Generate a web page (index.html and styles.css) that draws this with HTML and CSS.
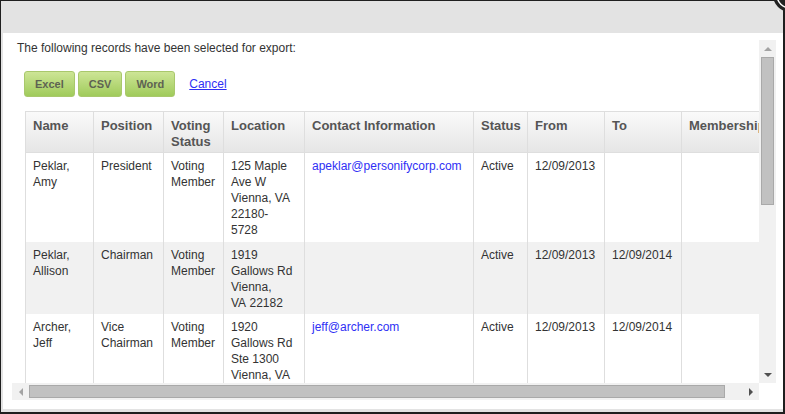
FILE: index.html
```html
<!DOCTYPE html>
<html lang="en">
<head>
<meta charset="utf-8">
<title>Export Records</title>
<link rel="stylesheet" href="styles.css">
</head>
<body>
<div class="dialog">
  <div class="panel">
    <div class="scroller">
      <div class="viewport">
        <p class="intro">The following records have been selected for export:</p>
        <div class="actions">
          <button class="btn" type="button">Excel</button>
          <button class="btn" type="button">CSV</button>
          <button class="btn" type="button">Word</button>
          <a class="cancel" href="#">Cancel</a>
        </div>
        <table class="records">
          <thead>
            <tr>
              <th class="c-name">Name</th>
              <th class="c-pos">Position</th>
              <th class="c-vote">Voting Status</th>
              <th class="c-loc">Location</th>
              <th class="c-contact">Contact Information</th>
              <th class="c-status">Status</th>
              <th class="c-from">From</th>
              <th class="c-to">To</th>
              <th class="c-member">Membership</th>
            </tr>
          </thead>
          <tbody>
            <tr>
              <td>Peklar, Amy</td>
              <td>President</td>
              <td>Voting Member</td>
              <td>125 Maple Ave W Vienna, VA 22180-<wbr>5728</td>
              <td><a class="mail" href="#">apeklar@personifycorp.com</a></td>
              <td>Active</td>
              <td>12/09/2013</td>
              <td></td>
              <td></td>
            </tr>
            <tr class="alt">
              <td>Peklar, Allison</td>
              <td>Chairman</td>
              <td>Voting Member</td>
              <td>1919 Gallows Rd Vienna, VA&nbsp;22182</td>
              <td></td>
              <td>Active</td>
              <td>12/09/2013</td>
              <td>12/09/2014</td>
              <td></td>
            </tr>
            <tr>
              <td>Archer, Jeff</td>
              <td>Vice Chairman</td>
              <td>Voting Member</td>
              <td>1920 Gallows Rd Ste 1300 Vienna, VA 22182</td>
              <td><a class="mail" href="#">jeff@archer.com</a></td>
              <td>Active</td>
              <td>12/09/2013</td>
              <td>12/09/2014</td>
              <td></td>
            </tr>
          </tbody>
        </table>
      </div>
      <div class="vbar">
        <div class="sb-btn"><span class="arr arr-up"></span></div>
        <div class="vthumb"></div>
        <div class="sb-fill"></div>
        <div class="sb-btn"><span class="arr arr-down"></span></div>
      </div>
      <div class="hbar">
        <div class="sb-btn"><span class="arr arr-left"></span></div>
        <div class="hthumb"></div>
        <div class="sb-fill"></div>
        <div class="sb-btn"><span class="arr arr-right"></span></div>
      </div>
    </div>
  </div>
  <svg class="close" width="16" height="16" viewBox="0 0 16 16" aria-hidden="true">
    <circle cx="21" cy="-5" r="17" fill="#222"/>
    <circle cx="21" cy="-5" r="13" fill="none" stroke="#fff" stroke-width="1.5"/>
  </svg>
</div>
</body>
</html>
```
FILE: styles.css
```css
html, body {
  margin: 0;
  padding: 0;
}

body {
  font-family: "Liberation Sans", Arial, sans-serif;
  font-size: 12px;
  color: #333;
  background: #e3e3e3;
}

.dialog {
  position: relative;
  box-sizing: border-box;
  width: 785px;
  height: 414px;
  border-style: solid;
  border-color: #1f1f1f;
  border-width: 1px 2px 2px 1px;
  background: #e3e3e3;
  padding: 32px 0 3px 2px;
  display: flex;
}

.panel {
  flex: 1;
  background: #fff;
  padding: 7px 7px 9px 9px;
  display: flex;
  min-width: 0;
}

.scroller {
  flex: 1;
  display: grid;
  grid-template-columns: minmax(0, 1fr) 17px;
  grid-template-rows: minmax(0, 1fr) 17px;
  min-width: 0;
  min-height: 0;
}

.viewport {
  overflow: hidden;
  min-width: 0;
  min-height: 0;
}

.intro {
  margin: 0 0 0 5px;
  line-height: 16px;
}

.actions {
  display: flex;
  align-items: center;
  gap: 3px;
  margin: 15px 0 0 12px;
}

.btn {
  box-sizing: border-box;
  height: 26px;
  padding: 0 10px;
  border: 1px solid #a9c86c;
  border-radius: 3px;
  background: linear-gradient(#cde596, #a0cb5b);
  font-family: "Liberation Sans", Arial, sans-serif;
  font-size: 11px;
  font-weight: bold;
  color: #5e6352;
  cursor: pointer;
}

.cancel {
  margin-left: 11px;
  color: #2f2ff5;
  text-decoration: underline;
  font-size: 12px;
}

.records {
  margin: 14px 0 0 13px;
  table-layout: fixed;
  width: 777px;
  border-collapse: separate;
  border-spacing: 0;
  border-top: 1px solid #dedede;
  border-left: 1px solid #dedede;
}

.records th,
.records td {
  box-sizing: border-box;
  border-right: 1px solid #dedede;
  vertical-align: top;
  text-align: left;
  line-height: 16px;
}

.records th {
  padding: 6px 10px 2px 7px;
  border-bottom: 1px solid #dedede;
  background: linear-gradient(#fafafa, #e6e6e6);
  font-size: 13px;
  font-weight: bold;
  color: #555;
}

.records td {
  padding: 5px 10px 4px 7px;
  font-size: 12px;
  color: #333;
}

.records tr.alt td {
  background: #f1f1f1;
  padding-bottom: 3px;
}

.c-name { width: 68px; }
.c-pos { width: 70px; }
.c-vote { width: 60px; }
.c-loc { width: 81px; }
.c-contact { width: 169px; }
.c-status { width: 54px; }
.c-from { width: 77px; }
.c-to { width: 77px; }
.c-member { width: 120px; }

.mail {
  color: #2f2ff5;
  text-decoration: none;
}

.vbar {
  background: #f1f1f1;
  display: flex;
  flex-direction: column;
  align-items: center;
}

.hbar {
  background: #f1f1f1;
  display: flex;
  align-items: center;
}

.sb-btn {
  width: 17px;
  height: 17px;
  flex: none;
  display: flex;
  align-items: center;
  justify-content: center;
}

.sb-fill {
  flex: 1;
}

.vthumb {
  box-sizing: border-box;
  width: 13px;
  height: 148px;
  background: #c1c1c1;
  border: 1px solid #a9a9a9;
}

.hthumb {
  box-sizing: border-box;
  width: 696px;
  height: 13px;
  background: #c1c1c1;
  border: 1px solid #a9a9a9;
}

.arr {
  width: 0;
  height: 0;
  display: block;
}

.arr-up {
  border-left: 4px solid transparent;
  border-right: 4px solid transparent;
  border-bottom: 4px solid #a3a3a3;
}

.arr-down {
  border-left: 4px solid transparent;
  border-right: 4px solid transparent;
  border-top: 4px solid #505050;
}

.arr-left {
  border-top: 4px solid transparent;
  border-bottom: 4px solid transparent;
  border-right: 4px solid #a3a3a3;
}

.arr-right {
  border-top: 4px solid transparent;
  border-bottom: 4px solid transparent;
  border-left: 4px solid #505050;
}

.close {
  position: absolute;
  top: -1px;
  right: -2px;
  overflow: hidden;
}
```
